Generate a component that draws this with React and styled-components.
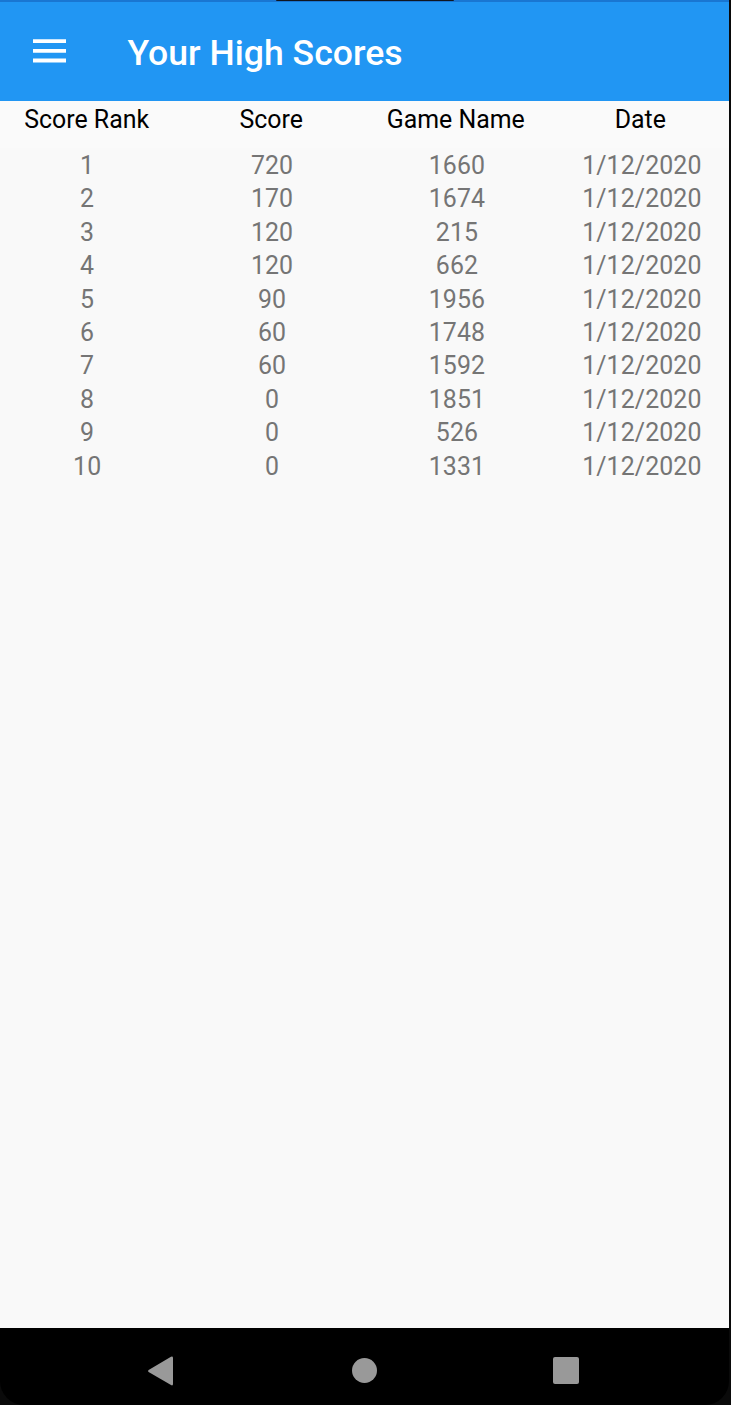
import React from 'react';
import styled, { createGlobalStyle } from 'styled-components';

const GlobalStyle = createGlobalStyle`
  * {
    box-sizing: border-box;
  }

  body {
    margin: 0;
    background: #0a0a0a;
    font-family: Roboto, 'Liberation Sans', sans-serif;
  }
`;

const Screen = styled.div`
  display: flex;
  flex-direction: column;
  width: 729px;
  height: 1405px;
`;

const StatusBar = styled.div`
  display: flex;
  justify-content: center;
  height: 2px;
  background: #1976d2;
`;

const Notch = styled.div`
  width: 178px;
  height: 1px;
  background: #10161f;
  border-radius: 0 0 4px 4px;
`;

const AppBar = styled.header`
  display: flex;
  align-items: center;
  height: 99px;
  padding: 0 0 2px 33px;
  background: #2196f3;
`;

const MenuButton = styled.button`
  display: flex;
  width: 33px;
  margin-right: 61.5px;
  padding: 0;
  border: 0;
  background: none;
`;

const Title = styled.h1`
  margin: 4px 0 0;
  font-size: 35.6px;
  font-weight: 500;
  line-height: 42px;
  color: #fff;
  white-space: nowrap;
`;

const TableRow = styled.div`
  display: grid;
  grid-template-columns: repeat(4, 1fr);
  column-gap: 10.6px;
  text-align: center;
  white-space: nowrap;
`;

const TableHead = styled(TableRow)`
  height: 47px;
  padding: 2px 2px 0 0;
  column-gap: 11.3px;
  font-size: 24.9px;
  line-height: 34px;
  color: #000;
  background: #fafafa;
`;

const ScoreList = styled.main`
  flex: 1;
  padding-top: 1px;
  background: #f9f9f9;
`;

const ScoreRow = styled(TableRow)`
  height: 33.4px;
  font-size: 24.9px;
  line-height: 34px;
  letter-spacing: 0.1px;
  color: #757575;
`;

const NavBar = styled.nav`
  display: flex;
  align-items: center;
  height: 77px;
  padding: 8px 0 0 147px;
  background: #000;
  border-radius: 0 0 24px 24px;
`;

const BackIcon = styled.svg`
  width: 27px;
  height: 30px;
  margin-right: 178px;
  fill: #999;
`;

const HomeIcon = styled.div`
  width: 25px;
  height: 25px;
  margin-right: 176px;
  border-radius: 50%;
  background: #999;
`;

const RecentIcon = styled.div`
  width: 26px;
  height: 27px;
  border-radius: 2px;
  background: #999;
`;

const scores = [
  { score: 720, game: 1660 },
  { score: 170, game: 1674 },
  { score: 120, game: 215 },
  { score: 120, game: 662 },
  { score: 90, game: 1956 },
  { score: 60, game: 1748 },
  { score: 60, game: 1592 },
  { score: 0, game: 1851 },
  { score: 0, game: 526 },
  { score: 0, game: 1331 },
];

function App() {
  return (
    <>
      <GlobalStyle />
      <Screen>
        <StatusBar>
          <Notch />
        </StatusBar>
        <AppBar>
          <MenuButton aria-label="Menu">
            <svg width="33" height="24" viewBox="0 0 33 24" fill="#fff">
              <path d="M0 0.2h33v3.8H0zM0 10h33v3.8H0zM0 19.6h33v3.8H0z" />
            </svg>
          </MenuButton>
          <Title>Your High Scores</Title>
        </AppBar>
        <TableHead>
          <span>Score Rank</span>
          <span>Score</span>
          <span>Game Name</span>
          <span>Date</span>
        </TableHead>
        <ScoreList>
          {scores.map((item, index) => (
            <ScoreRow key={item.game}>
              <span>{index + 1}</span>
              <span>{item.score}</span>
              <span>{item.game}</span>
              <span>1/12/2020</span>
            </ScoreRow>
          ))}
        </ScoreList>
        <NavBar>
          <BackIcon viewBox="0 0 27 30">
            <path d="M1.6 14 24 .7Q26 0 26 2v26Q26 30 24 29.1L1.6 16Q.4 15 1.6 14z" />
          </BackIcon>
          <HomeIcon />
          <RecentIcon />
        </NavBar>
      </Screen>
    </>
  );
}

export default App;
